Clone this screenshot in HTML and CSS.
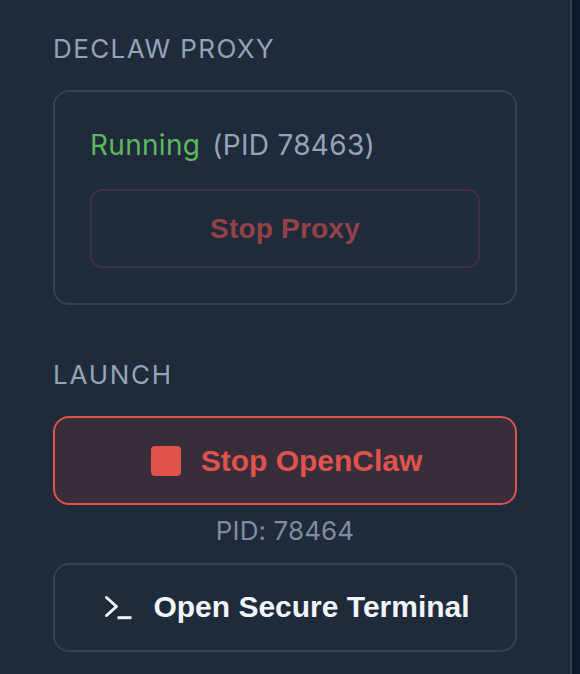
FILE: index.html
```html
<!DOCTYPE html>
<html lang="en">
<head>
    <meta charset="UTF-8">
    <title>Declaw</title>
    <link rel="stylesheet" href="styles.css">
</head>
<body>
    <div class="sidebar">
        <h2 class="section-title">DECLAW PROXY</h2>
        <div class="card">
            <div class="status">
                <span class="status-running">Running</span>
                <span class="status-pid">(PID 78463)</span>
            </div>
            <button class="btn btn-stop-proxy">Stop Proxy</button>
        </div>

        <h2 class="section-title section-launch">LAUNCH</h2>
        <button class="btn btn-stop-app">
            <span class="stop-icon"></span>
            Stop OpenClaw
        </button>
        <p class="pid-line">PID: 78464</p>
        <button class="btn btn-terminal">
            <svg class="terminal-icon" width="28" height="25" viewBox="0 0 28 25" fill="none" stroke="#f1f5f9" stroke-width="3" stroke-linecap="round" stroke-linejoin="round">
                <path d="M2.5 2.5 L12.5 11.5 L2.5 20.5"/>
                <path d="M13.5 22.7 L27.5 22.7" stroke-linecap="butt"/>
            </svg>
            Open Secure Terminal
        </button>
    </div>
</body>
</html>
```

FILE: styles.css
```css
html, body {
    height: 100%;
}
body {
    margin: 0;
    background-color: #0f172a;
    font-family: 'Inter', sans-serif;
    overflow: hidden;
}
.sidebar {
    box-sizing: border-box;
    width: 572px;
    height: 100%;
    padding: 36px 53px 0;
    background-color: #1f2a3b;
    border-right: 2px solid #334155;
}
.section-title {
    margin: 0 0 26px;
    color: #94a3b8;
    font-size: 26px;
    font-weight: 400;
    line-height: 26px;
    padding-bottom: 2px;
    letter-spacing: 1.4px;
}
.section-launch {
    margin-top: 57px;
    margin-bottom: 26px;
    letter-spacing: 1.75px;
}
.card {
    padding: 35px;
    border: 2px solid #334155;
    border-radius: 16px;
}
.status {
    display: flex;
    gap: 12px;
    margin-bottom: 26px;
    font-size: 28px;
    line-height: 36px;
    letter-spacing: 0.3px;
}
.status-running {
    color: #5cb85c;
}
.status-pid {
    color: #94a3b8;
}
.btn {
    display: flex;
    align-items: center;
    justify-content: center;
    box-sizing: border-box;
    width: 100%;
    background: none;
    border-radius: 16px;
    font-family: 'Liberation Sans', Arial, sans-serif;
    font-size: 30px;
    font-weight: 700;
}
.btn-stop-proxy {
    height: 79px;
    border: 2px solid rgba(224, 82, 77, 0.3);
    border-radius: 12px;
    color: #e0524d;
    font-size: 28px;
    letter-spacing: 0.2px;
    opacity: 0.6;
}
.btn-stop-app {
    gap: 20px;
    height: 89px;
    padding-left: 9px;
    border: 2px solid #e0524d;
    background-color: #372e3a;
    color: #e0524d;
}
.stop-icon {
    width: 30px;
    height: 30px;
    background-color: #e0524d;
    border-radius: 4px;
}
.pid-line {
    margin: 10px 0 16px;
    color: #808c9f;
    font-size: 26px;
    line-height: 32px;
    letter-spacing: 0.1px;
    text-align: center;
}
.btn-terminal {
    gap: 21px;
    height: 89px;
    padding: 0 6px 2px 10px;
    border: 2px solid #334155;
    color: #f1f5f9;
}
.terminal-icon {
    margin-top: 2px;
}
```
